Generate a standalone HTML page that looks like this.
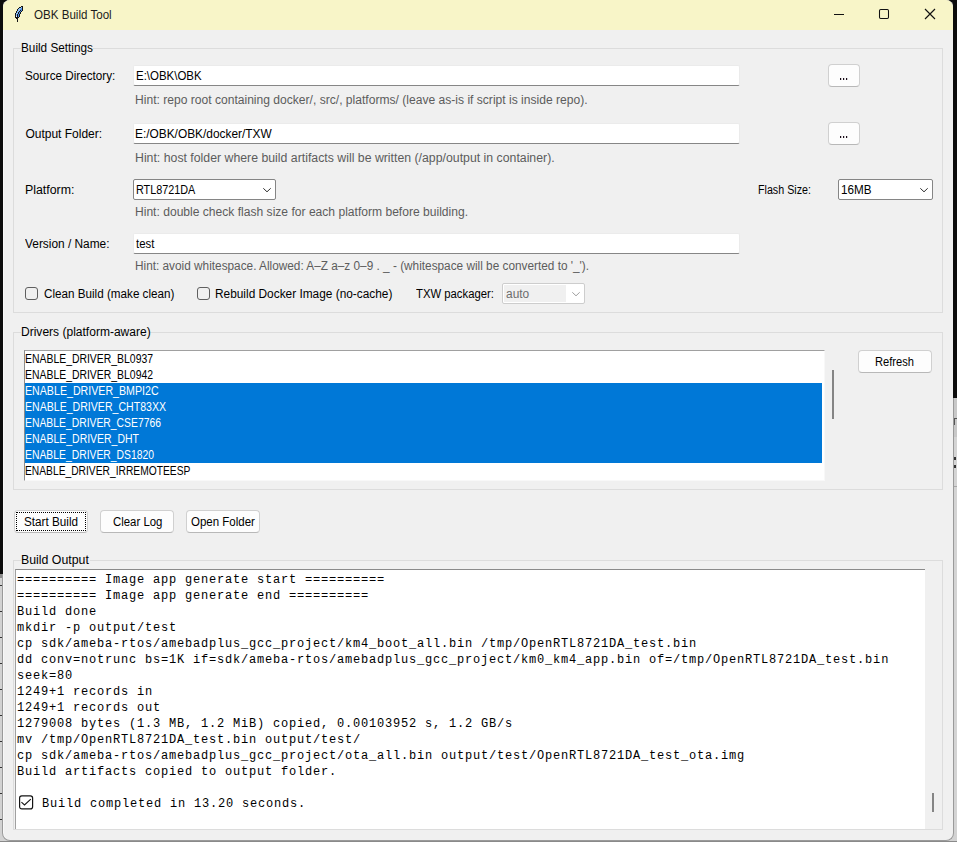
<!DOCTYPE html>
<html><head><meta charset="utf-8">
<style>
html,body{margin:0;padding:0;}
body{width:957px;height:842px;position:relative;overflow:hidden;background:#0c0c0c;font-family:"Liberation Sans",sans-serif;font-size:12px;}
.abs{position:absolute;box-sizing:border-box;}
.t{position:absolute;white-space:pre;line-height:14px;font-size:12px;transform-origin:0 0;font-family:"Liberation Sans",sans-serif;}
#win{position:absolute;box-sizing:border-box;left:2px;top:0;width:952px;height:841px;background:#f0f0f0;border:1px solid #9a9a9a;border-top:none;border-radius:8px;overflow:hidden;box-shadow:inset 1px 0 0 #f8f8f8;}
#title{position:absolute;left:0;top:0;width:950px;height:30px;background:#f8f5c8;}
.lf{position:absolute;box-sizing:border-box;border:1px solid #dcdcdc;}
.lbg{position:absolute;background:#f0f0f0;height:10px;}
.entry{position:absolute;box-sizing:border-box;background:#fff;border:1px solid #ebebeb;border-bottom:1px solid #868686;border-radius:2px;}
.combo{position:absolute;box-sizing:border-box;background:#fff;border:1px solid #858585;border-radius:2px;}
.btn{position:absolute;box-sizing:border-box;background:#fdfdfd;border:1px solid #d0d0d0;border-bottom-color:#b8b8b8;border-radius:4px;}
.chk{position:absolute;box-sizing:border-box;width:13px;height:13px;border:1px solid #5f5f5f;border-radius:3px;background:transparent;}
#log{position:absolute;left:17px;top:572px;font-family:"Liberation Mono",monospace;font-size:12px;letter-spacing:0.8px;line-height:16px;white-space:pre;color:#000;}
</style></head><body>
<!-- background strips -->
<div class="abs" style="left:0;top:574px;width:14px;height:268px;background:#d2d2d2;"></div>
<div class="abs" style="left:0;top:574px;width:3px;height:4px;background:#8c8c8c;"></div>
<div class="abs" style="left:0;top:585px;width:2px;height:1px;background:#333;"></div>
<div class="abs" style="left:0;top:611px;width:2px;height:1px;background:#333;"></div>
<div class="abs" style="left:0;top:637px;width:2px;height:1px;background:#333;"></div>
<div class="abs" style="left:0;top:663px;width:2px;height:1px;background:#333;"></div>
<div class="abs" style="left:0;top:689px;width:2px;height:1px;background:#333;"></div>
<div class="abs" style="left:0;top:715px;width:2px;height:1px;background:#333;"></div>
<div class="abs" style="left:0;top:741px;width:2px;height:1px;background:#333;"></div>
<div class="abs" style="left:0;top:767px;width:2px;height:1px;background:#333;"></div>
<div class="abs" style="left:0;top:793px;width:2px;height:1px;background:#333;"></div>
<div class="abs" style="left:0;top:819px;width:2px;height:1px;background:#333;"></div>
<div class="abs" style="left:940px;top:398px;width:17px;height:444px;background:#d4d4d4;"></div>
<div class="abs" style="left:940px;top:398px;width:17px;height:39px;background:#c8c8c8;"></div>
<div class="abs" style="left:940px;top:486px;width:17px;height:1px;background:#a8a8a8;"></div>
<div class="abs" style="left:954px;top:418px;width:3px;height:7px;border-top:1px solid #555;border-left:1px solid #555;box-sizing:border-box;"></div>
<div class="abs" style="left:954px;top:457px;width:2px;height:3px;background:#333;"></div>
<div class="abs" style="left:954px;top:465px;width:2px;height:3px;background:#333;"></div>
<div class="abs" style="left:0;top:830px;width:957px;height:12px;background:#d2d2d2;"></div>
<div class="abs" style="left:0;top:841px;width:957px;height:1px;background:#8a8a8a;"></div>
<div id="win">
 <div id="title"></div>
</div>
<div class="abs" style="left:0;top:0;width:3px;height:574px;background:#0c0c0c;"></div>
<div class="abs" style="left:953px;top:0;width:4px;height:398px;background:#0c0c0c;"></div>
<!-- title bar icons -->
<svg class="abs" style="left:0;top:0" width="30" height="30" shape-rendering="crispEdges"><rect x="21" y="6" width="1" height="1" fill="#151515"/><rect x="22" y="6" width="1" height="1" fill="#151515"/><rect x="19" y="7" width="1" height="1" fill="#151515"/><rect x="20" y="7" width="1" height="1" fill="#151515"/><rect x="21" y="7" width="1" height="1" fill="#8cc0f8"/><rect x="22" y="7" width="1" height="1" fill="#151515"/><rect x="18" y="8" width="1" height="1" fill="#151515"/><rect x="19" y="8" width="1" height="1" fill="#8cc0f8"/><rect x="20" y="8" width="1" height="1" fill="#8cc0f8"/><rect x="21" y="8" width="1" height="1" fill="#4d8fe6"/><rect x="22" y="8" width="1" height="1" fill="#151515"/><rect x="17" y="9" width="1" height="1" fill="#151515"/><rect x="18" y="9" width="1" height="1" fill="#8cc0f8"/><rect x="19" y="9" width="1" height="1" fill="#8cc0f8"/><rect x="20" y="9" width="1" height="1" fill="#4d8fe6"/><rect x="21" y="9" width="1" height="1" fill="#4d8fe6"/><rect x="22" y="9" width="1" height="1" fill="#151515"/><rect x="17" y="10" width="1" height="1" fill="#151515"/><rect x="18" y="10" width="1" height="1" fill="#8cc0f8"/><rect x="19" y="10" width="1" height="1" fill="#8cc0f8"/><rect x="20" y="10" width="1" height="1" fill="#151515"/><rect x="21" y="10" width="1" height="1" fill="#4d8fe6"/><rect x="22" y="10" width="1" height="1" fill="#151515"/><rect x="16" y="11" width="1" height="1" fill="#151515"/><rect x="17" y="11" width="1" height="1" fill="#8cc0f8"/><rect x="18" y="11" width="1" height="1" fill="#8cc0f8"/><rect x="19" y="11" width="1" height="1" fill="#151515"/><rect x="20" y="11" width="1" height="1" fill="#4d8fe6"/><rect x="21" y="11" width="1" height="1" fill="#151515"/><rect x="16" y="12" width="1" height="1" fill="#151515"/><rect x="17" y="12" width="1" height="1" fill="#8cc0f8"/><rect x="18" y="12" width="1" height="1" fill="#151515"/><rect x="19" y="12" width="1" height="1" fill="#4d8fe6"/><rect x="20" y="12" width="1" height="1" fill="#151515"/><rect x="15" y="13" width="1" height="1" fill="#151515"/><rect x="16" y="13" width="1" height="1" fill="#8cc0f8"/><rect x="17" y="13" width="1" height="1" fill="#8cc0f8"/><rect x="18" y="13" width="1" height="1" fill="#151515"/><rect x="19" y="13" width="1" height="1" fill="#4d8fe6"/><rect x="20" y="13" width="1" height="1" fill="#151515"/><rect x="15" y="14" width="1" height="1" fill="#151515"/><rect x="16" y="14" width="1" height="1" fill="#8cc0f8"/><rect x="17" y="14" width="1" height="1" fill="#151515"/><rect x="18" y="14" width="1" height="1" fill="#4d8fe6"/><rect x="19" y="14" width="1" height="1" fill="#151515"/><rect x="15" y="15" width="1" height="1" fill="#151515"/><rect x="16" y="15" width="1" height="1" fill="#8cc0f8"/><rect x="17" y="15" width="1" height="1" fill="#151515"/><rect x="18" y="15" width="1" height="1" fill="#4d8fe6"/><rect x="19" y="15" width="1" height="1" fill="#151515"/><rect x="15" y="16" width="1" height="1" fill="#151515"/><rect x="16" y="16" width="1" height="1" fill="#e8f0ff"/><rect x="17" y="16" width="1" height="1" fill="#151515"/><rect x="18" y="16" width="1" height="1" fill="#4d8fe6"/><rect x="19" y="16" width="1" height="1" fill="#151515"/><rect x="15" y="17" width="1" height="1" fill="#151515"/><rect x="16" y="17" width="1" height="1" fill="#151515"/><rect x="17" y="17" width="1" height="1" fill="#151515"/><rect x="18" y="17" width="1" height="1" fill="#151515"/><rect x="16" y="18" width="1" height="1" fill="#151515"/><rect x="17" y="18" width="1" height="1" fill="#151515"/><rect x="17" y="19" width="1" height="1" fill="#151515"/><rect x="17" y="20" width="1" height="2" fill="#151515"/></svg>
<svg class="abs" style="left:0;top:0" width="957" height="30">
 <line x1="834" y1="14.5" x2="844" y2="14.5" stroke="#111" stroke-width="1"/>
 <rect x="879.5" y="9.5" width="9" height="9" rx="1.2" fill="none" stroke="#111" stroke-width="1.05"/>
 <path d="M925 9 L935 19 M935 9 L925 19" stroke="#111" stroke-width="1.15"/>
</svg>

<!-- Build settings frame -->
<div class="lf" style="left:13px;top:48px;width:930px;height:265px;"></div>
<div class="lbg" style="left:21px;top:44px;width:72px;"></div>
<div class="entry" style="left:133px;top:65px;width:607px;height:21px;"></div>
<div class="btn" style="left:828px;top:64px;width:32px;height:23px;"></div>
<div class="entry" style="left:133px;top:123px;width:607px;height:21px;"></div>
<div class="btn" style="left:828px;top:122px;width:32px;height:23px;"></div>
<div class="combo" style="left:133px;top:179px;width:143px;height:21px;"></div>
<div class="combo" style="left:838px;top:179px;width:95px;height:21px;"></div>
<div class="entry" style="left:133px;top:233px;width:607px;height:21px;"></div>
<div class="chk" style="left:25px;top:287px;"></div>
<div class="chk" style="left:197px;top:287px;"></div>
<div class="abs" style="left:502px;top:283px;width:83px;height:21px;border:1px solid #cdcdcd;border-radius:2px;background:#fff;"></div>
<div class="abs" style="left:504px;top:285px;width:62px;height:17px;background:#f0f0f0;"></div>
<svg class="abs" style="left:0;top:0" width="957" height="320">
 <rect x="840" y="78" width="1.2" height="2" fill="#1a0d18"/>
 <rect x="843" y="78" width="1.2" height="2" fill="#1a0d18"/>
 <rect x="846" y="78" width="1.2" height="2" fill="#1a0d18"/>
 <rect x="840" y="136" width="1.2" height="2" fill="#1a0d18"/>
 <rect x="843" y="136" width="1.2" height="2" fill="#1a0d18"/>
 <rect x="846" y="136" width="1.2" height="2" fill="#1a0d18"/>
 <path d="M263.3 188.3 L267 191.8 L270.7 188.3" fill="none" stroke="#303030" stroke-width="1"/>
 <path d="M920.3 188.3 L924 191.8 L927.7 188.3" fill="none" stroke="#303030" stroke-width="1"/>
 <path d="M572.3 292.3 L576 295.8 L579.7 292.3" fill="none" stroke="#a0a0a0" stroke-width="1"/>
</svg>

<!-- Drivers frame -->
<div class="lf" style="left:13px;top:332px;width:930px;height:158px;"></div>
<div class="lbg" style="left:21px;top:328px;width:129px;"></div>
<div class="abs" style="left:24px;top:350px;width:801px;height:131px;background:#fff;border-left:1px solid #8c8c8c;border-top:1px solid #a0a0a0;border-right:1px solid #f8f8f8;border-bottom:1px solid #f8f8f8;"></div>
<div class="abs" style="left:25px;top:383px;width:797px;height:80px;background:#0078d7;"></div>
<div class="abs" style="left:832px;top:370px;width:2px;height:49px;background:#858585;"></div>
<div class="btn" style="left:858px;top:350px;width:74px;height:23px;"></div>

<!-- Buttons -->
<div class="btn" style="left:14px;top:510px;width:74px;height:23px;"></div>
<div class="abs" style="left:16px;top:512px;width:70px;height:19px;border:1px dotted #000;"></div>
<div class="btn" style="left:100px;top:510px;width:74px;height:23px;"></div>
<div class="btn" style="left:186px;top:510px;width:74px;height:23px;"></div>

<!-- Build output frame -->
<div class="lf" style="left:13px;top:560px;width:930px;height:270px;"></div>
<div class="lbg" style="left:21px;top:556px;width:69px;"></div>
<div class="abs" style="left:15px;top:569px;width:910px;height:260px;background:#fff;border-left:1px solid #a0a0a0;border-top:1px solid #8a8a8a;"></div>
<div class="abs" style="left:932px;top:793px;width:2px;height:19px;background:#858585;"></div>
<div id="log">========== Image app generate start ==========
========== Image app generate end ==========
Build done
mkdir -p output/test
cp sdk/ameba-rtos/amebadplus_gcc_project/km4_boot_all.bin /tmp/OpenRTL8721DA_test.bin
dd conv=notrunc bs=1K if=sdk/ameba-rtos/amebadplus_gcc_project/km0_km4_app.bin of=/tmp/OpenRTL8721DA_test.bin
seek=80
1249+1 records in
1249+1 records out
1279008 bytes (1.3 MB, 1.2 MiB) copied, 0.00103952 s, 1.2 GB/s
mv /tmp/OpenRTL8721DA_test.bin output/test/
cp sdk/ameba-rtos/amebadplus_gcc_project/ota_all.bin output/test/OpenRTL8721DA_test_ota.img
Build artifacts copied to output folder.
&nbsp;
&nbsp;</div>
<div id="log2" style="position:absolute;left:42px;top:796px;font-family:'Liberation Mono',monospace;font-size:12px;letter-spacing:0.8px;line-height:16px;white-space:pre;color:#000;">Build completed in 13.20 seconds.</div>
<svg class="abs" style="left:18px;top:795px" width="17" height="16">
 <rect x="1.6" y="0.9" width="13" height="13" rx="2.2" fill="none" stroke="#141414" stroke-width="1.2"/>
 <path d="M3.4 7.2 L6.5 10 L12.8 4.1" fill="none" stroke="#141414" stroke-width="1.1"/>
</svg>

<div class="t" style="left:33.60px;top:8px;color:#1c1c1c;transform:scaleX(0.9646);">OBK Build Tool</div>
<div class="t" style="left:20.50px;top:41px;color:#000000;transform:scaleX(0.9801);">Build Settings</div>
<div class="t" style="left:24.90px;top:69px;color:#000000;transform:scaleX(0.9746);">Source Directory:</div>
<div class="t" style="left:135.50px;top:69px;color:#000000;transform:scaleX(0.9555);">E:\OBK\OBK</div>
<div class="t" style="left:134.80px;top:93px;color:#5c5c5c;transform:scaleX(1.0068);">Hint: repo root containing docker/, src/, platforms/ (leave as-is if script is inside repo).</div>
<div class="t" style="left:25.40px;top:127px;color:#000000;">Output Folder:</div>
<div class="t" style="left:135.40px;top:127px;color:#000000;transform:scaleX(0.9899);">E:/OBK/OBK/docker/TXW</div>
<div class="t" style="left:134.50px;top:151px;color:#5c5c5c;transform:scaleX(1.0247);">Hint: host folder where build artifacts will be written (/app/output in container).</div>
<div class="t" style="left:25.40px;top:183px;color:#000000;transform:scaleX(1.0305);">Platform:</div>
<div class="t" style="left:136.20px;top:183px;color:#000000;transform:scaleX(0.9013);">RTL8721DA</div>
<div class="t" style="left:758.10px;top:183px;color:#000000;transform:scaleX(0.8914);">Flash Size:</div>
<div class="t" style="left:840.50px;top:183px;color:#000000;transform:scaleX(0.9715);">16MB</div>
<div class="t" style="left:134.80px;top:205px;color:#5c5c5c;transform:scaleX(1.0066);">Hint: double check flash size for each platform before building.</div>
<div class="t" style="left:25.40px;top:237px;color:#000000;transform:scaleX(0.9902);">Version / Name:</div>
<div class="t" style="left:136.40px;top:237px;color:#000000;transform:scaleX(0.9496);">test</div>
<div class="t" style="left:134.80px;top:259px;color:#5c5c5c;transform:scaleX(0.9839);">Hint: avoid whitespace. Allowed: A–Z a–z 0–9 . _ - (whitespace will be converted to &#x27;_&#x27;).</div>
<div class="t" style="left:43.80px;top:287px;color:#000000;transform:scaleX(0.9727);">Clean Build (make clean)</div>
<div class="t" style="left:214.80px;top:287px;color:#000000;transform:scaleX(0.9888);">Rebuild Docker Image (no-cache)</div>
<div class="t" style="left:415.50px;top:287px;color:#000000;transform:scaleX(0.9422);">TXW packager:</div>
<div class="t" style="left:505.60px;top:287px;color:#6d6d6d;transform:scaleX(0.9928);">auto</div>
<div class="t" style="left:20.90px;top:325px;color:#000000;transform:scaleX(1.0028);">Drivers (platform-aware)</div>
<div class="t" style="left:25.40px;top:352px;color:#000000;transform:scaleX(0.8685);">ENABLE_DRIVER_BL0937</div>
<div class="t" style="left:25.40px;top:368px;color:#000000;transform:scaleX(0.8685);">ENABLE_DRIVER_BL0942</div>
<div class="t" style="left:25.40px;top:384px;color:#ffffff;transform:scaleX(0.8865);">ENABLE_DRIVER_BMPI2C</div>
<div class="t" style="left:25.40px;top:400px;color:#ffffff;transform:scaleX(0.8810);">ENABLE_DRIVER_CHT83XX</div>
<div class="t" style="left:25.40px;top:416px;color:#ffffff;transform:scaleX(0.8636);">ENABLE_DRIVER_CSE7766</div>
<div class="t" style="left:25.40px;top:432px;color:#ffffff;transform:scaleX(0.8717);">ENABLE_DRIVER_DHT</div>
<div class="t" style="left:25.40px;top:448px;color:#ffffff;transform:scaleX(0.8636);">ENABLE_DRIVER_DS1820</div>
<div class="t" style="left:25.40px;top:464px;color:#000000;transform:scaleX(0.8548);">ENABLE_DRIVER_IRREMOTEESP</div>
<div class="t" style="left:875.10px;top:355px;color:#000000;transform:scaleX(0.9291);">Refresh</div>
<div class="t" style="left:24.30px;top:515px;color:#000000;transform:scaleX(0.9769);">Start Build</div>
<div class="t" style="left:113.10px;top:515px;color:#000000;transform:scaleX(0.9503);">Clear Log</div>
<div class="t" style="left:191.10px;top:515px;color:#000000;transform:scaleX(0.9580);">Open Folder</div>
<div class="t" style="left:20.50px;top:553px;color:#000000;transform:scaleX(1.0273);">Build Output</div>
</body></html>
